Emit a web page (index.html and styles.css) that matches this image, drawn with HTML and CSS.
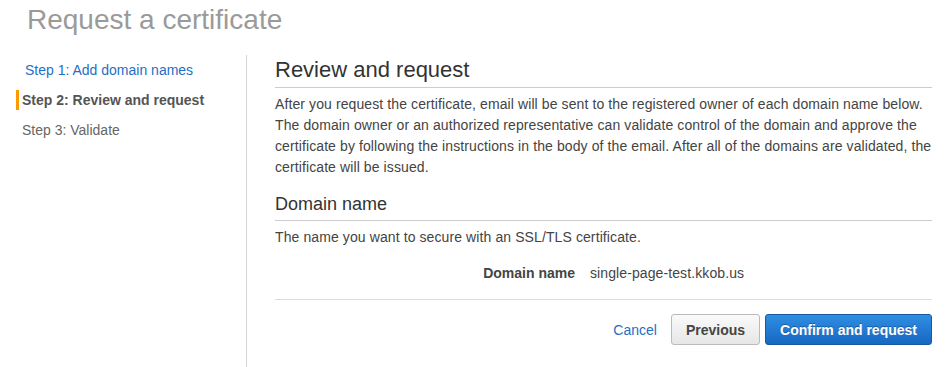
FILE: index.html
```html
<!DOCTYPE html>
<html>
<head>
  <meta charset="utf-8">
  <title>Request a certificate</title>
  <link rel="stylesheet" href="styles.css">
</head>
<body>

  <h1 class="page-title">Request a certificate</h1>

  <div class="wizard">
    <!-- Steps -->
    <ul class="steps">
      <li class="step done"><a href="#">Step 1: Add domain names</a></li>
      <li class="step current">Step 2: Review and request</li>
      <li class="step">Step 3: Validate</li>
    </ul>

    <!-- Review -->
    <div class="panel">
      <h2 class="section-title">Review and request</h2>
      <p class="text">After you request the certificate, email will be sent to the registered owner of each domain name below.
        The domain owner or an authorized representative can validate control of the domain and approve the
        certificate by following the instructions in the body of the email. After all of the domains are validated, the
        certificate will be issued.</p>

      <h3 class="sub-title">Domain name</h3>
      <p class="text">The name you want to secure with an SSL/TLS certificate.</p>

      <div class="field-row">
        <span class="field-label">Domain name</span>
        <span class="field-value">single-page-test.kkob.us</span>
      </div>

      <div class="actions">
        <a href="#" class="cancel">Cancel</a>
        <button class="btn">Previous</button>
        <button class="btn primary">Confirm and request</button>
      </div>
    </div>
  </div>

</body>
</html>
```

FILE: styles.css
```css
body {
  margin: 0;
  background: #fff;
  color: #444;
  font-family: "Liberation Sans", Arial, sans-serif;
  font-size: 14px;
}
.page-title {
  margin: 0;
  padding: 4px 0 0 27px;
  height: 55px;
  box-sizing: border-box;
  font-size: 28px;
  font-weight: normal;
  line-height: 32px;
  color: #9a9a9a;
}
.wizard {
  display: flex;
  min-height: 312px;
}
.steps {
  list-style: none;
  margin: 0;
  padding: 0;
  width: 246px;
  border-right: 1px solid #d5d5d5;
  flex-shrink: 0;
}
.step {
  height: 30px;
  line-height: 30px;
  padding-left: 22px;
  font-size: 14px;
  color: #666;
  position: relative;
}
.step a {
  color: #1f6fc5;
  text-decoration: none;
  padding-left: 3px;
}
.step.current {
  font-weight: bold;
  color: #555;
}
.step.current::before {
  content: "";
  position: absolute;
  left: 16px;
  top: 5px;
  width: 3px;
  height: 20px;
  background: #f90;
}
.panel {
  flex: 1;
  padding: 0 18px 0 28px;
}
.section-title {
  margin: 0;
  padding: 3px 0 5px;
  font-size: 22px;
  font-weight: normal;
  line-height: 24px;
  color: #333;
  border-bottom: 1px solid #ccc;
}
.text {
  margin: 6px 0 0;
  line-height: 21px;
  letter-spacing: 0.1px;
  color: #444;
}
.sub-title {
  margin: 15px 0 0;
  padding-bottom: 5px;
  font-size: 18px;
  font-weight: normal;
  line-height: 22px;
  color: #333;
  border-bottom: 1px solid #ccc;
}
.field-row {
  display: flex;
  gap: 15px;
  margin-top: 15px;
  padding-bottom: 15px;
  border-bottom: 1px solid #ddd;
  line-height: 21px;
}
.field-label {
  width: 300px;
  text-align: right;
  font-weight: bold;
  color: #444;
}
.field-value {
  color: #444;
  letter-spacing: 0.1px;
}
.actions {
  display: flex;
  justify-content: flex-end;
  align-items: center;
  margin-top: 14px;
}
.cancel {
  color: #1f6fc5;
  text-decoration: none;
  margin-right: 14px;
}
.btn {
  height: 31px;
  padding: 0 14px;
  margin-left: 5px;
  border: 1px solid #bbb;
  border-radius: 3px;
  background: linear-gradient(#fafafa, #e6e6e6);
  color: #444;
  font-family: inherit;
  font-size: 14px;
  font-weight: bold;
}
.btn:first-of-type {
  margin-left: 0;
}
.btn.primary {
  border-color: #19599f;
  background: linear-gradient(#2f8ee3, #1767c2);
  color: #fff;
  text-shadow: 0 -1px 0 rgba(0, 0, 0, 0.3);
}
```
